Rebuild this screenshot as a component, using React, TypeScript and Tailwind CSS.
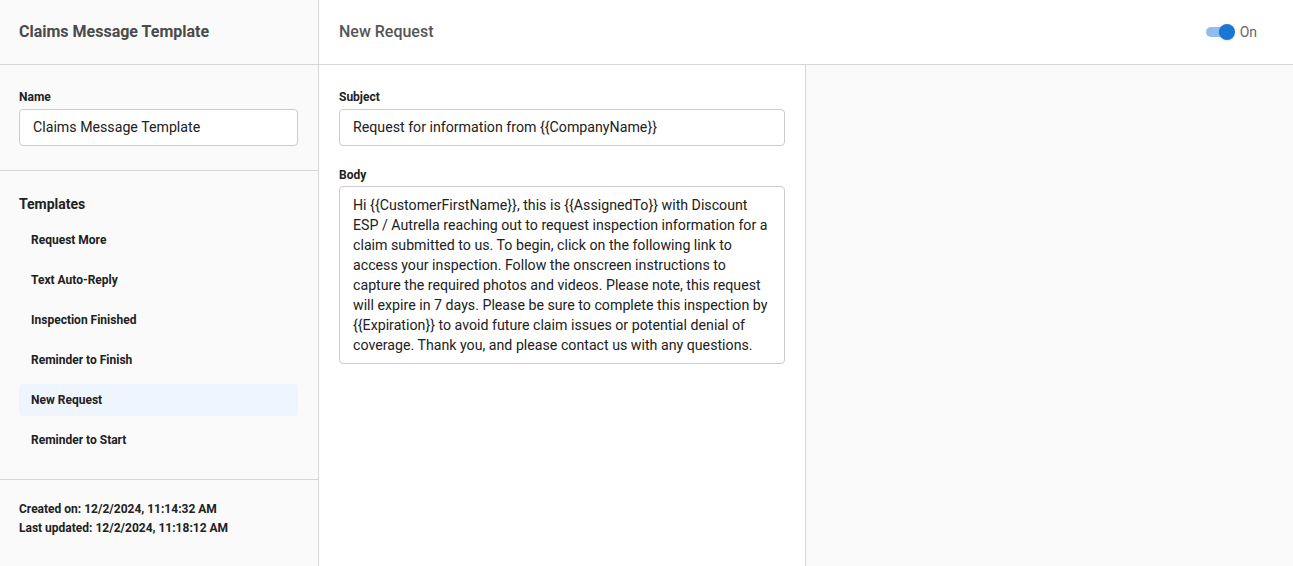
const templates = [
  'Request More',
  'Text Auto-Reply',
  'Inspection Finished',
  'Reminder to Finish',
  'New Request',
  'Reminder to Start',
]

const body =
  'Hi {{CustomerFirstName}}, this is {{AssignedTo}} with Discount ESP / Autrella reaching out to request inspection information for a claim submitted to us. To begin, click on the following link to access your inspection. Follow the onscreen instructions to capture the required photos and videos. Please note, this request will expire in 7 days. Please be sure to complete this inspection by {{Expiration}} to avoid future claim issues or potential denial of coverage. Thank you, and please contact us with any questions.'

export default function App() {
  return (
    <div className="flex h-[566px] w-full overflow-hidden bg-white font-['Roboto',sans-serif] text-[#212121]">
      {/* Sidebar */}
      <aside className="flex w-[319px] shrink-0 flex-col border-r border-[#d6d6d6] bg-[#fafafa]">
        <div className="flex h-[65px] shrink-0 items-center border-b border-[#d6d6d6] px-[19px]">
          <h1 className="text-[16px] font-bold text-[#4a4a4a]">Claims Message Template</h1>
        </div>

        <div className="border-b border-[#d6d6d6] px-[19px] pt-[25px] pb-[24px]">
          <label className="block text-[12px] font-bold leading-[15px]">Name</label>
          <div className="mt-[4px] flex h-[37px] w-[279px] items-center rounded-[4px] border border-[#cccccc] bg-white px-[13px] text-[14.2px]">
            Claims Message Template
          </div>
        </div>

        <div className="border-b border-[#d6d6d6] px-[19px] pt-[23px] pb-[23px]">
          <h2 className="text-[14px] font-bold leading-[20px]">Templates</h2>
          <ul className="mt-[10px] flex w-[279px] flex-col gap-[8px]">
            {templates.map((t) => (
              <li
                key={t}
                className={`flex h-[32px] items-center rounded-[4px] px-[12px] text-[12px] font-bold ${
                  t === 'New Request' ? 'bg-[#eef5fe]' : ''
                }`}
              >
                {t}
              </li>
            ))}
          </ul>
        </div>

        <div className="px-[19px] pt-[20px] text-[12px] font-bold leading-[19px]">
          <p>Created on: 12/2/2024, 11:14:32 AM</p>
          <p>Last updated: 12/2/2024, 11:18:12 AM</p>
        </div>
      </aside>

      {/* Main */}
      <main className="flex min-w-0 flex-1 flex-col">
        <div className="flex h-[65px] shrink-0 items-center justify-between border-b border-[#d6d6d6] pl-[20px] pr-[36px]">
          <h2 className="text-[16px] font-medium text-[#555555]">New Request</h2>
          <div className="flex items-center gap-[5px]">
            <div className="relative h-[16px] w-[29px]">
              <div className="absolute left-0 top-[3px] h-[10px] w-[26px] rounded-full bg-[#8fbdf0]" />
              <div className="absolute right-0 top-0 h-[16px] w-[16px] rounded-full bg-[#1976d2] shadow-sm" />
            </div>
            <span className="text-[14px] text-[#666666]">On</span>
          </div>
        </div>

        <div className="flex min-h-0 flex-1">
          <section className="w-[487px] shrink-0 border-r border-[#d6d6d6] bg-white px-[20px] pt-[25px]">
            <label className="block text-[12px] font-bold leading-[15px]">Subject</label>
            <div className="mt-[4px] flex h-[37px] w-[446px] items-center rounded-[4px] border border-[#cccccc] px-[13px] text-[14.2px]">
              Request for information from {'{{CompanyName}}'}
            </div>

            <label className="mt-[22px] block text-[12px] font-bold leading-[15px]">Body</label>
            <div className="mt-[3px] w-[446px] rounded-[4px] border border-[#cccccc] px-[13px] pt-[8px] pb-[8px] text-[14.2px] leading-[20px]">
              {body}
            </div>
          </section>
          <div className="flex-1 bg-[#fafafa]" />
        </div>
      </main>
    </div>
  )
}
